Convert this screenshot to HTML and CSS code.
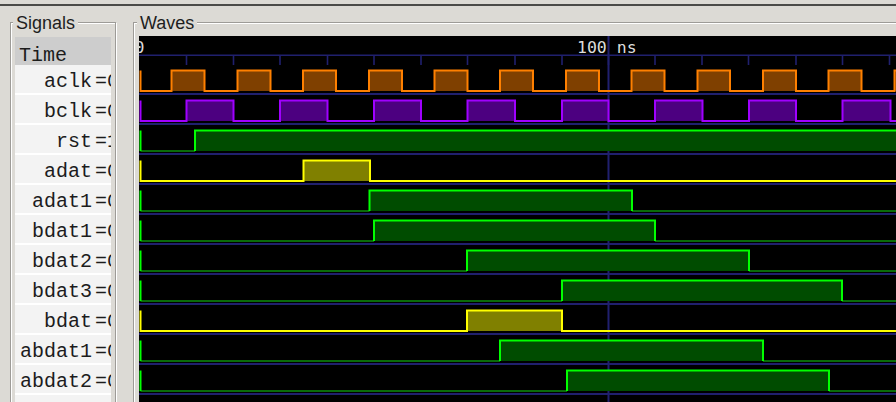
FILE: index.html
```html
<!DOCTYPE html>
<html>
<head>
<meta charset="utf-8">
<link rel="stylesheet" href="styles.css">
</head>
<body>
<div class="topbar"></div>
<div class="main">
  <section class="frame signals">
    <div class="frame-label">Signals</div>
    <div class="siglist">
      <div class="sig-head">Time</div>
      <div class="sig"><span class="name">aclk</span><span class="val">=0</span></div>
      <div class="sig"><span class="name">bclk</span><span class="val">=0</span></div>
      <div class="sig"><span class="name">rst</span><span class="val">=1</span></div>
      <div class="sig"><span class="name">adat</span><span class="val">=0</span></div>
      <div class="sig"><span class="name">adat1</span><span class="val">=0</span></div>
      <div class="sig"><span class="name">bdat1</span><span class="val">=0</span></div>
      <div class="sig"><span class="name">bdat2</span><span class="val">=0</span></div>
      <div class="sig"><span class="name">bdat3</span><span class="val">=0</span></div>
      <div class="sig"><span class="name">bdat</span><span class="val">=0</span></div>
      <div class="sig"><span class="name">abdat1</span><span class="val">=0</span></div>
      <div class="sig"><span class="name">abdat2</span><span class="val">=0</span></div>
    </div>
  </section>
  <section class="frame waves">
    <div class="frame-label">Waves</div>
    <div class="wavepane">
      <svg class="wavesvg" width="760" height="366" viewBox="139 36 760 366">
        <!-- ruler -->
        <rect class="grid" x="139" y="54.5" width="760" height="1.5"/>
        <path class="tick" d="M186.5 55V65M233.5 55V65M280 55V65M327.5 55V65M374 55V65M421 55V65M467.5 55V65M515 55V65M562 55V65M608.5 55V65M655 55V65M702 55V65M748.5 55V65M796 55V65M842.5 55V65M889.5 55V65"/>
        <text class="rtext" x="134.5" y="52.5">0</text>
        <text class="rtext" x="577" y="52.5">100 ns</text>
        <!-- row separators -->
        <rect class="grid" x="139" y="93" width="760" height="2"/>
        <rect class="grid" x="139" y="123" width="760" height="2"/>
        <rect class="grid" x="139" y="153" width="760" height="2"/>
        <rect class="grid" x="139" y="183" width="760" height="2"/>
        <rect class="grid" x="139" y="213" width="760" height="2"/>
        <rect class="grid" x="139" y="243" width="760" height="2"/>
        <rect class="grid" x="139" y="273" width="760" height="2"/>
        <rect class="grid" x="139" y="303" width="760" height="2"/>
        <rect class="grid" x="139" y="333" width="760" height="2"/>
        <rect class="grid" x="139" y="363" width="760" height="2"/>
        <rect class="grid" x="139" y="393" width="760" height="2"/>
        <!-- cursor -->
        <rect class="grid" x="607.5" y="36" width="2" height="366"/>

        <!-- aclk -->
        <path class="f-orange" d="M171.5 70.5H204.5V91H171.5ZM237.5 70.5H270.5V91H237.5ZM303 70.5H336V91H303ZM369 70.5H402V91H369ZM434.5 70.5H467.5V91H434.5ZM500 70.5H533V91H500ZM566 70.5H599V91H566ZM631.5 70.5H664.5V91H631.5ZM697.5 70.5H730V91H697.5ZM763 70.5H796V91H763ZM828.5 70.5H861.5V91H828.5ZM894.5 70.5H900V91H894.5Z"/>
        <path class="s-orange" d="M140.5 70.5V91H171.5V70.5H204.5V91H237.5V70.5H270.5V91H303V70.5H336V91H369V70.5H402V91H434.5V70.5H467.5V91H500V70.5H533V91H566V70.5H599V91H631.5V70.5H664.5V91H697.5V70.5H730V91H763V70.5H796V91H828.5V70.5H861.5V91H894.5V70.5H900"/>

        <!-- bclk -->
        <path class="f-purple" d="M186.5 100.5H233.5V121H186.5ZM280 100.5H327.5V121H280ZM374 100.5H421V121H374ZM467.5 100.5H515V121H467.5ZM562 100.5H608.5V121H562ZM655 100.5H702.5V121H655ZM749 100.5H796V121H749ZM842.5 100.5H890.5V121H842.5Z"/>
        <path class="s-purple" d="M140.5 100.5V121H186.5V100.5H233.5V121H280V100.5H327.5V121H374V100.5H421V121H467.5V100.5H515V121H562V100.5H608.5V121H655V100.5H702.5V121H749V100.5H796V121H842.5V100.5H890.5V121H900"/>

        <!-- rst -->
        <rect class="f-green" x="195" y="130.5" width="710" height="20.5"/>
        <path class="s-glow" d="M140.5 151H195"/>
        <path class="s-green" d="M140.5 130.5V151M195 151V130.5H900"/>

        <!-- adat -->
        <rect class="f-yellow" x="303.5" y="160.5" width="66.5" height="20.5"/>
        <path class="s-yellow" d="M140.5 160.5V181H303.5V160.5H370V181H900"/>

        <!-- adat1 -->
        <rect class="f-green" x="369.5" y="190.5" width="262.5" height="20.5"/>
        <path class="s-glow" d="M140.5 211H369.5M632 211H900"/>
        <path class="s-green" d="M140.5 190.5V211M369.5 211V190.5H632V211"/>

        <!-- bdat1 -->
        <rect class="f-green" x="374" y="220.5" width="281" height="20.5"/>
        <path class="s-glow" d="M140.5 241H374M655 241H900"/>
        <path class="s-green" d="M140.5 220.5V241M374 241V220.5H655V241"/>

        <!-- bdat2 -->
        <rect class="f-green" x="467" y="250.5" width="282" height="20.5"/>
        <path class="s-glow" d="M140.5 271H467M749 271H900"/>
        <path class="s-green" d="M140.5 250.5V271M467 271V250.5H749V271"/>

        <!-- bdat3 -->
        <rect class="f-green" x="562" y="280.5" width="280" height="20.5"/>
        <path class="s-glow" d="M140.5 301H562M842 301H900"/>
        <path class="s-green" d="M140.5 280.5V301M562 301V280.5H842V301"/>

        <!-- bdat -->
        <rect class="f-yellow" x="467" y="310.5" width="95" height="20.5"/>
        <path class="s-yellow" d="M140.5 310.5V331H467V310.5H562V331H900"/>

        <!-- abdat1 -->
        <rect class="f-green" x="500" y="340.5" width="263" height="20.5"/>
        <path class="s-glow" d="M140.5 361H500M763 361H900"/>
        <path class="s-green" d="M140.5 340.5V361M500 361V340.5H763V361"/>

        <!-- abdat2 -->
        <rect class="f-green" x="567" y="370.5" width="262" height="20.5"/>
        <path class="s-glow" d="M140.5 391H567M829 391H900"/>
        <path class="s-green" d="M140.5 370.5V391M567 391V370.5H829V391"/>
      </svg>
    </div>
  </section>
</div>
</body>
</html>
```

FILE: styles.css
```css
html, body {
  margin: 0;
  padding: 0;
}

body {
  width: 896px;
  height: 402px;
  overflow: hidden;
  background: #dcdad5;
  font-family: "Liberation Sans", Arial, sans-serif;
}

.topbar {
  height: 4px;
  border-bottom: 2px solid #4a4a48;
}

.main {
  display: flex;
  gap: 17px;
  padding: 16px 0 0 10px;
}

.frame {
  box-sizing: border-box;
  height: 400px;
  flex: none;
  border: 1px solid #9d9b97;
  box-shadow: inset 1px 1px 0 #ffffff, 1px 1px 0 #ffffff;
}

.signals {
  width: 106px;
  padding: 0 4px;
}

.waves {
  width: 800px;
  padding: 0 0 0 5px;
}

.frame-label {
  width: fit-content;
  margin: -10px 0 0 -2px;
  padding: 0 3px;
  font-size: 18px;
  line-height: 20px;
  color: #1e1e1e;
  background: #dcdad5;
}

.siglist {
  margin-top: 4px;
  height: 400px;
  overflow: hidden;
  background: #f3f3f3;
  font-family: "Liberation Mono", "Courier New", monospace;
  font-size: 20px;
  color: #1c1c1c;
}

.sig-head {
  box-sizing: border-box;
  height: 28px;
  padding: 9px 0 0 4px;
  line-height: 19px;
  background: #cdcdcd;
}

.sig {
  display: flex;
  box-sizing: border-box;
  height: 30px;
  padding-top: 6px;
  line-height: 22px;
  white-space: nowrap;
  border-bottom: 2px solid #ffffff;
}

.name {
  flex: none;
  width: 77px;
  text-align: right;
}

.val {
  flex: none;
  margin-left: 3px;
}

.wavepane {
  margin-top: 3px;
  height: 380px;
  overflow: hidden;
  background: #000000;
}

.wavesvg {
  display: block;
}

.grid {
  fill: #20206e;
}

.tick {
  stroke: #20206e;
  stroke-width: 1.6;
  fill: none;
}

.rtext {
  font-family: "DejaVu Sans Mono", monospace;
  font-size: 16.5px;
  fill: #dcdcdc;
}

.f-orange { fill: #7f4000; }
.s-orange { fill: none; stroke: #ff8000; stroke-width: 2; }

.f-purple { fill: #4c0080; }
.s-purple { fill: none; stroke: #a000ff; stroke-width: 2; }

.f-green { fill: #004c00; }
.s-green { fill: none; stroke: #00ff00; stroke-width: 2; }
.s-glow { fill: none; stroke: #0a6a0a; stroke-width: 2; }

.f-yellow { fill: #808000; }
.s-yellow { fill: none; stroke: #ffff00; stroke-width: 2; }
```
